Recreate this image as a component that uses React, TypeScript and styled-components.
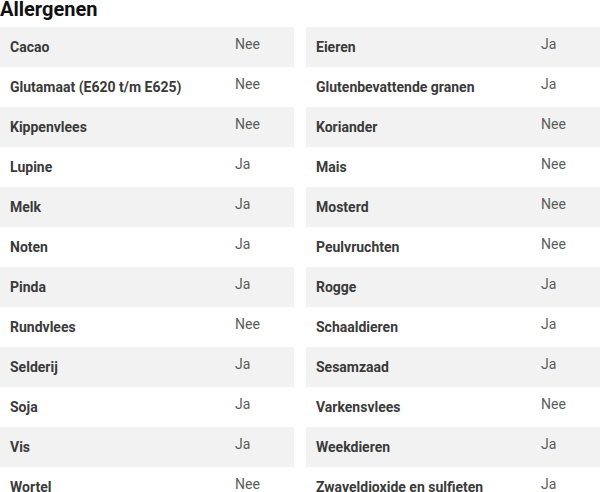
import React from 'react';
import styled, { createGlobalStyle } from 'styled-components';

const Global = createGlobalStyle`
  html, body {
    margin: 0;
    padding: 0;
    background: #fff;
    font-family: Roboto, "Liberation Sans", sans-serif;
  }
`;

const rows: [string, string][] = [
  ['Cacao', 'Nee'],
  ['Eieren', 'Ja'],
  ['Glutamaat (E620 t/m E625)', 'Nee'],
  ['Glutenbevattende granen', 'Ja'],
  ['Kippenvlees', 'Nee'],
  ['Koriander', 'Nee'],
  ['Lupine', 'Ja'],
  ['Mais', 'Nee'],
  ['Melk', 'Ja'],
  ['Mosterd', 'Nee'],
  ['Noten', 'Ja'],
  ['Peulvruchten', 'Nee'],
  ['Pinda', 'Ja'],
  ['Rogge', 'Ja'],
  ['Rundvlees', 'Nee'],
  ['Schaaldieren', 'Ja'],
  ['Selderij', 'Ja'],
  ['Sesamzaad', 'Ja'],
  ['Soja', 'Ja'],
  ['Varkensvlees', 'Nee'],
  ['Vis', 'Ja'],
  ['Weekdieren', 'Ja'],
  ['Wortel', 'Nee'],
  ['Zwaveldioxide en sulfieten', 'Ja'],
];

const Page = styled.div`
  width: 600px;
  height: 492px;
  overflow: hidden;
`;

const Title = styled.h2`
  margin: 0 0 9px;
  font-size: 20px;
  line-height: 18px;
  font-weight: 700;
  color: #111;
`;

const Grid = styled.div`
  display: grid;
  grid-template-columns: 294px 294px;
  column-gap: 12px;
`;

const Row = styled.div<{ $shaded: boolean }>`
  display: grid;
  grid-template-columns: 225px 1fr;
  align-items: center;
  height: 40px;
  padding-left: 10px;
  background: ${(p) => (p.$shaded ? '#f2f2f2' : '#fff')};
`;

const Label = styled.span`
  font-size: 14px;
  font-weight: 700;
  color: #3a3a3a;
`;

const Value = styled.span`
  font-size: 14px;
  color: #5c5c5c;
  padding-bottom: 6px;
`;

export default function App() {
  return (
    <Page>
      <Global />
      <Title>Allergenen</Title>
      <Grid>
        {rows.map(([name, val], i) => (
          <Row key={name} $shaded={Math.floor(i / 2) % 2 === 0}>
            <Label>{name}</Label>
            <Value>{val}</Value>
          </Row>
        ))}
      </Grid>
    </Page>
  );
}
